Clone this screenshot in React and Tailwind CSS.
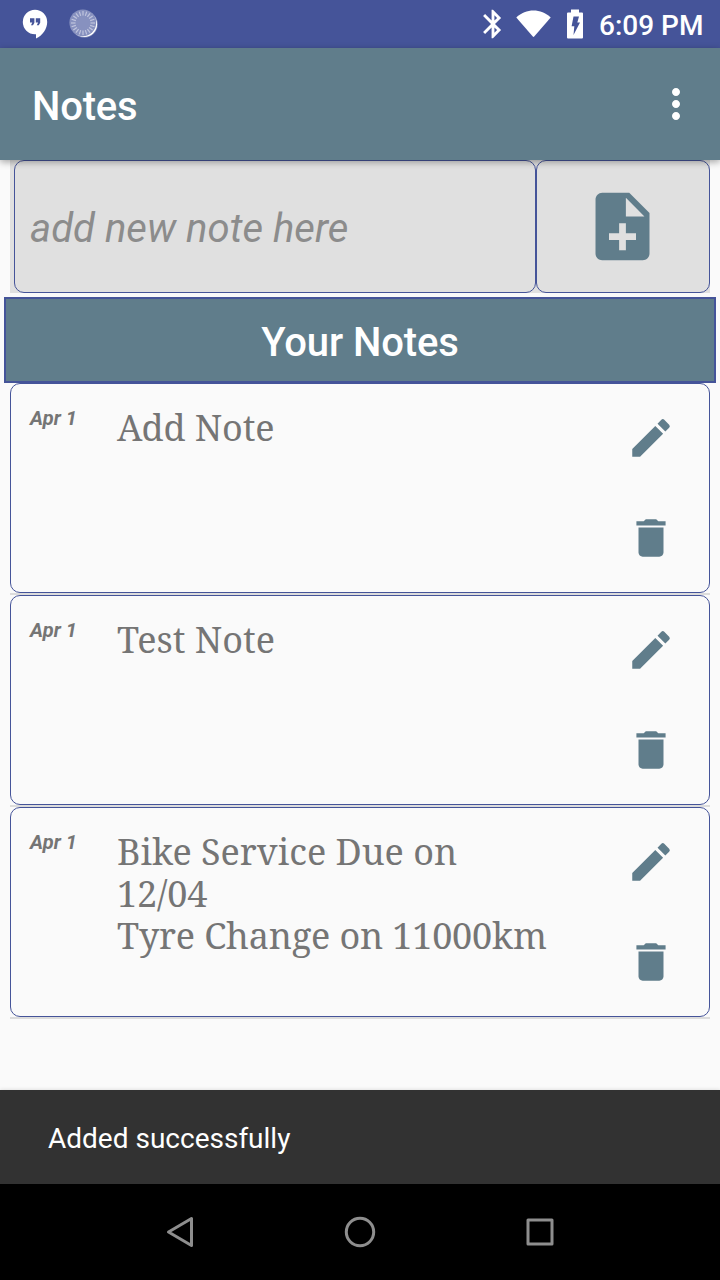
import React from "react";
import { MdNoteAdd, MdEdit, MdDelete, MdMoreVert, MdBluetooth } from "react-icons/md";

const NOTES = [
  { date: "Apr 1", lines: [{ text: "Add Note", tracking: "tracking-[-0.12px]" }] },
  { date: "Apr 1", lines: [{ text: "Test Note", tracking: "tracking-normal" }] },
  {
    date: "Apr 1",
    lines: [
      { text: "Bike Service Due on", tracking: "tracking-normal" },
      { text: "12/04", tracking: "tracking-[-0.15px]" },
      { text: "Tyre Change on 11000km", tracking: "tracking-[-0.17px]" },
    ],
  },
];

const TICKS = Array.from({ length: 20 }, (_, i) => i * 18);

function StatusBar() {
  return (
    <header className="flex h-12 shrink-0 items-center bg-[#455499] pl-[22px] pr-4 text-white">
      <svg width="26" height="30" viewBox="0 0 26 30" fill="#fff">
        <path d="M13 0.800A12.200 12.200 0 0 0 13 25.200h1v4.400C20.500 26.400 25.200 20 25.200 13A12.200 12.200 0 0 0 13 0.800z" />
        <path d="M8 9.200h4.400v4.600L11 16.200H9l1.300-2.700H8zM13.800 9.200h4.400v4.600l-1.400 2.400h-2l1.300-2.700h-2.300z" fill="#455499" />
      </svg>
      <svg className="ml-[21px]" width="30" height="30" viewBox="0 0 30 30">
        <circle cx="15.300" cy="15.300" r="13.500" fill="#fff" opacity="0.3" />
        <circle cx="15.300" cy="15.300" r="12.800" fill="#fff" />
        <circle cx="13.800" cy="13.800" r="13.400" fill="#8791bf" />
        {TICKS.map((a) => (
          <path key={a} d="M14 2v4.500" stroke="#c0c5de" strokeWidth="1.200" transform={`rotate(${a} 14 14)`} />
        ))}
      </svg>
      <div className="flex-1" />
      <MdBluetooth size={34} />
      <svg className="ml-[6px]" width="36" height="28" viewBox="0 0 36 28" fill="#fff">
        <path d="M0.300 7.500C10-1.700 25-1.700 34.700 7.500L18.200 26.500q-.7.800-1.400 0z" />
      </svg>
      <svg className="ml-[15px]" width="16" height="30" viewBox="0 0 16 30">
        <path d="M4 0.500h8v3h3q1 0 1 1v24q0 1-1 1H1q-1 0-1-1v-24q0-1 1-1h3z" fill="#fff" />
        <path d="M6.500 7.500h5.500L10.300 13.400h2.700L6.500 26 7.300 17.300H4.600z" fill="#455499" />
      </svg>
      <span className="ml-4 w-[105px] whitespace-nowrap pt-[3px] text-[28px] leading-[34px] font-medium">6:09 PM</span>
    </header>
  );
}

function NoteCard({ date, lines }) {
  return (
    <li className="border-b-2 border-[#dcdcdc]">
      <article className="flex h-[210px] rounded-[10px] border border-[#455499] pl-[19px]">
        <span className="w-[87px] pt-[22px] text-[20px] leading-6 font-bold text-[#757575] italic">{date}</span>
        <div className="flex-1 pt-[23px] font-['Noto_Serif','Droid_Serif','DejaVu_Serif_Condensed',serif] text-[36px] leading-[42px] whitespace-nowrap text-[#757575]">
          {lines.map(({ text, tracking }) => (
            <p key={text} className={tracking}>
              {text}
            </p>
          ))}
        </div>
        <div className="flex flex-col gap-[50px] pt-[29px] pr-[33px] text-[#607d8b]">
          <MdEdit size={50} />
          <MdDelete size={50} />
        </div>
      </article>
    </li>
  );
}

function NavigationBar() {
  return (
    <nav className="flex h-24 shrink-0 items-center justify-center gap-[140px] bg-black">
      <svg width="40" height="40" viewBox="0 0 40 40" fill="none" stroke="#8e8e8e" strokeWidth="3" strokeLinejoin="round">
        <path d="M31.500 6.500v27L8.500 20z" />
      </svg>
      <svg width="40" height="40" viewBox="0 0 40 40" fill="none" stroke="#8e8e8e" strokeWidth="3">
        <circle cx="20" cy="20" r="13.700" />
      </svg>
      <svg width="40" height="40" viewBox="0 0 40 40" fill="none" stroke="#8e8e8e" strokeWidth="3" strokeLinejoin="round">
        <path d="M8 8h24v24H8z" />
      </svg>
    </nav>
  );
}

export default function App() {
  return (
    <div className="flex h-[1280px] w-[720px] flex-col overflow-hidden bg-[#fafafa] font-[Roboto,sans-serif]">
      <StatusBar />
      <div className="relative z-10 flex h-28 shrink-0 items-center justify-between bg-[#607d8b] pr-5 pl-8 text-white shadow-[0_2px_7px_rgba(0,0,0,0.35)]">
        <h1 className="pt-[6px] text-[40px] leading-[48px] font-medium tracking-[-0.2px]">Notes</h1>
        <MdMoreVert size={48} />
      </div>
      <main className="flex flex-1 flex-col">
        <div className="mx-[10px] flex h-[133px] bg-[#e0e0e0] pl-1">
          <div className="flex w-[522px] items-center rounded-[10px] border border-[#455499] pl-[15px]">
            <span className="pt-[5px] text-[40px] leading-[48px] tracking-[0.05px] text-[#8c8c8c] italic">add new note here</span>
          </div>
          <button className="flex flex-1 items-center justify-center rounded-[10px] border border-[#455499] pr-px text-[#607d8b]">
            <MdNoteAdd size={81} />
          </button>
        </div>
        <h2 className="mx-1 mt-1 flex h-[86px] items-center justify-center border-2 border-[#455499] bg-[#607d8b] pt-[6px] text-[40px] leading-[48px] font-medium tracking-[-0.1px] text-white">
          Your Notes
        </h2>
        <ul className="mx-[10px]">
          {NOTES.map((note, i) => (
            <NoteCard key={i} {...note} />
          ))}
        </ul>
      </main>
      <div className="flex h-[94px] shrink-0 items-center bg-[#323232] pt-[4px] pl-12 text-[28px] text-white shadow-[0_0_4px_rgba(0,0,0,0.15)]">
        Added successfully
      </div>
      <NavigationBar />
    </div>
  );
}
